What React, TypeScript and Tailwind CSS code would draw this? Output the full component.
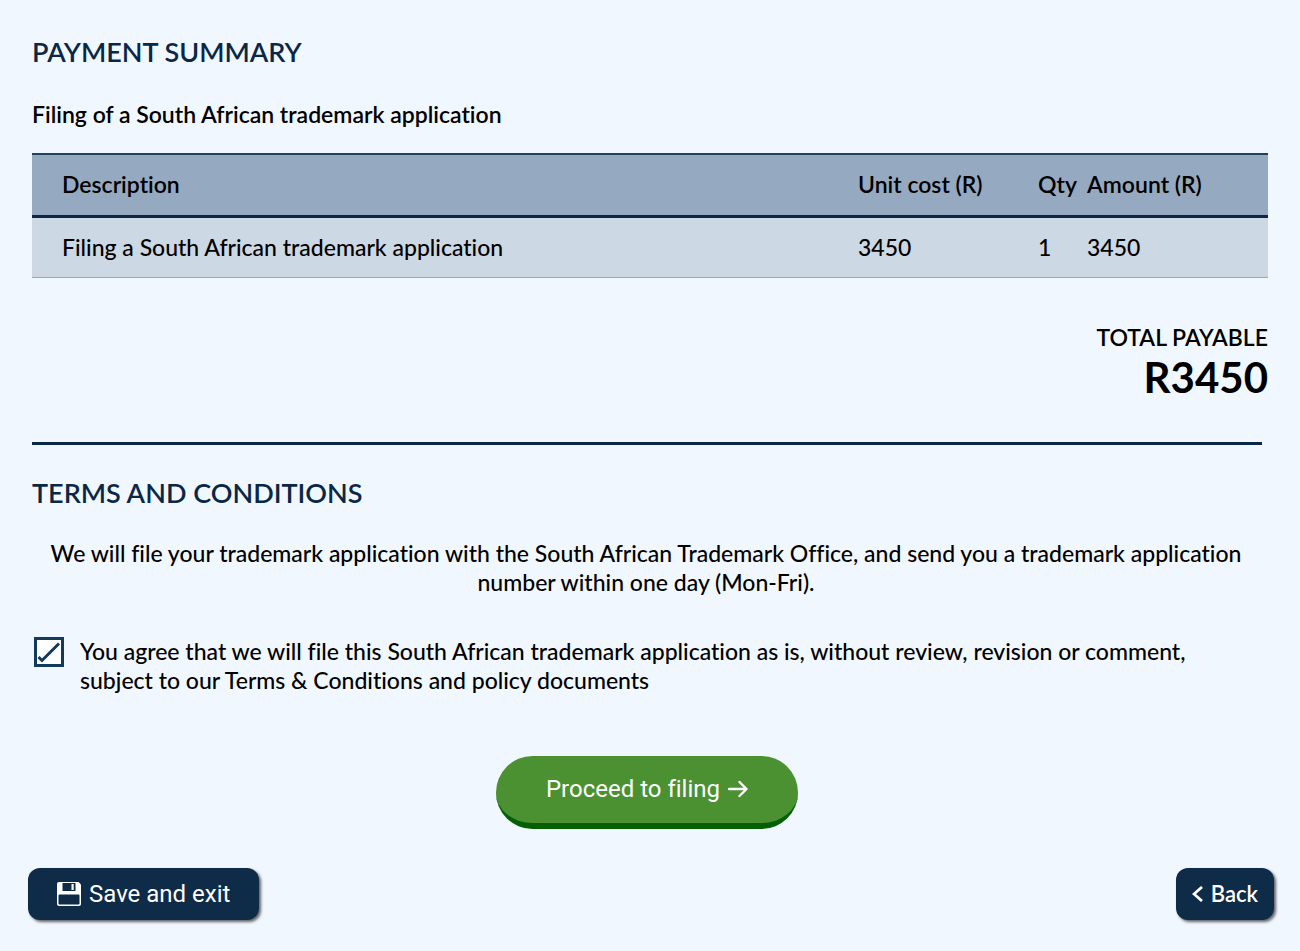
import { useState } from "react";

interface LineItem {
  description: string;
  unitCost: number;
  qty: number;
}

const items: LineItem[] = [
  {
    description: "Filing a South African trademark application",
    unitCost: 3450,
    qty: 1,
  },
];

const SaveIcon = () => (
  <svg width="24" height="24" viewBox="0 0 24 24" fill="none" aria-hidden="true">
    <path
      d="M2 0H21.500L24 2.500V22a2 2 0 0 1-2 2H2a2 2 0 0 1-2-2V2a2 2 0 0 1 2-2z"
      fill="#fff"
    />
    <path d="M5.500 1h13v8h-13z" fill="#0e2b47" />
    <path d="M14.500 2h2.200v6h-2.200z" fill="#fff" />
    <path
      d="M1.500 13.500a1 1 0 0 1 1-1h19a1 1 0 0 1 1 1v8a1 1 0 0 1-1 1h-19a1 1 0 0 1-1-1z"
      fill="#0e2b47"
    />
  </svg>
);

const ArrowIcon = () => (
  <svg width="20" height="18" viewBox="0 0 20 18" fill="none" aria-hidden="true">
    <path
      d="M1 9h17M11.500 2L18.500 9l-7 7"
      stroke="#fff"
      strokeWidth="2.400"
      strokeLinecap="round"
      strokeLinejoin="round"
    />
  </svg>
);

const BackIcon = () => (
  <svg width="11" height="16" viewBox="0 0 11 16" fill="none" aria-hidden="true">
    <path d="M10 1L2 8l8 7" stroke="#fff" strokeWidth="2.800" />
  </svg>
);

const App = () => {
  const [agreed, setAgreed] = useState(true);

  const total = items.reduce((sum, item) => sum + item.unitCost * item.qty, 0);

  return (
    <main className="min-h-screen bg-[#f1f7fe] px-8 pt-8 pb-7 font-['Lato',sans-serif] text-[23px] leading-[29px] text-black [font-variant-ligatures:no-common-ligatures]">
      <section>
        <h2 className="text-[27px] leading-10 font-semibold text-[#0a2845]">
          PAYMENT SUMMARY
        </h2>
        <h3 className="mt-7 font-semibold">
          Filing of a South African trademark application
        </h3>
        <table className="mt-6 w-full table-fixed border-collapse text-left">
          <thead>
            <tr className="h-[62px] border-t-2 border-b-[3px] border-t-[#21425c] border-b-[#0a2845] bg-[#95aac0]">
              <th className="pl-[30px] font-semibold">Description</th>
              <th className="w-[180px] font-semibold">Unit cost (R)</th>
              <th className="w-[49px] font-semibold">Qty</th>
              <th className="w-[181px] font-semibold">Amount (R)</th>
            </tr>
          </thead>
          <tbody className="font-medium">
            {items.map((item) => (
              <tr
                key={item.description}
                className="h-[61px] border-b border-[#95aac0] bg-[#cdd8e5]"
              >
                <td className="pl-[30px]">{item.description}</td>
                <td>{item.unitCost}</td>
                <td>{item.qty}</td>
                <td>{item.unitCost * item.qty}</td>
              </tr>
            ))}
          </tbody>
        </table>
        <div className="mt-[45px] text-right font-semibold">
          <p>TOTAL PAYABLE</p>
          <p className="text-[42px] leading-[50px] font-bold">R{total}</p>
        </div>
      </section>

      <hr className="mt-10 mr-1.5 border-t-[3px] border-[#0a2845]" />

      <section>
        <h2 className="mt-7 text-[27px] leading-10 font-semibold text-[#0a2845]">
          TERMS AND CONDITIONS
        </h2>
        <p className="mt-[26px] mr-2 text-center font-medium">
          We will file your trademark application with the South African
          Trademark Office, and send you a trademark application number within
          one day (Mon-Fri).
        </p>
        <div className="mt-10 flex items-start gap-4 pl-0.5">
          <span className="grid size-[30px] shrink-0">
            <input
              id="agree"
              type="checkbox"
              checked={agreed}
              onChange={(e) => setAgreed(e.target.checked)}
              className="col-start-1 row-start-1 size-[30px] appearance-none border-[3px] border-[#123a5a] bg-white"
            />
            {agreed && (
              <svg
                viewBox="0 0 30 30"
                fill="none"
                aria-hidden="true"
                className="pointer-events-none col-start-1 row-start-1 size-[30px]"
              >
                <path d="M4.500 20l3.500 3.500L25 6.500" stroke="#123a5a" strokeWidth="3" />
              </svg>
            )}
          </span>
          <label htmlFor="agree" className="max-w-[1130px] font-medium">
            You agree that we will file this South African trademark application
            as is, without review, revision or comment, subject to our Terms
            &amp; Conditions and policy documents
          </label>
        </div>
      </section>

      <div className="mt-[61px] mr-1.5 flex justify-center">
        <button
          type="button"
          className="flex h-[73px] items-center gap-2 rounded-full border-b-[6px] border-[#056005] bg-[#4b9132] px-[50px] font-['Roboto',sans-serif] text-2xl text-white"
        >
          Proceed to filing
          <ArrowIcon />
        </button>
      </div>

      <div className="-mr-1.5 -ml-1 mt-[39px] flex items-end justify-between">
        <button
          type="button"
          className="flex h-[52px] items-center gap-2 rounded-xl bg-[#0e2b47] px-[29px] font-['Roboto',sans-serif] text-2xl text-white shadow-[2px_2px_3px_rgba(0,0,0,0.6)]"
        >
          <SaveIcon />
          Save and exit
        </button>
        <button
          type="button"
          className="flex h-[52px] items-center gap-2 rounded-xl bg-[#0e2b47] px-4 text-[22px] font-semibold text-white shadow-[2px_2px_3px_rgba(0,0,0,0.6)]"
        >
          <BackIcon />
          Back
        </button>
      </div>
    </main>
  );
};

export default App;
